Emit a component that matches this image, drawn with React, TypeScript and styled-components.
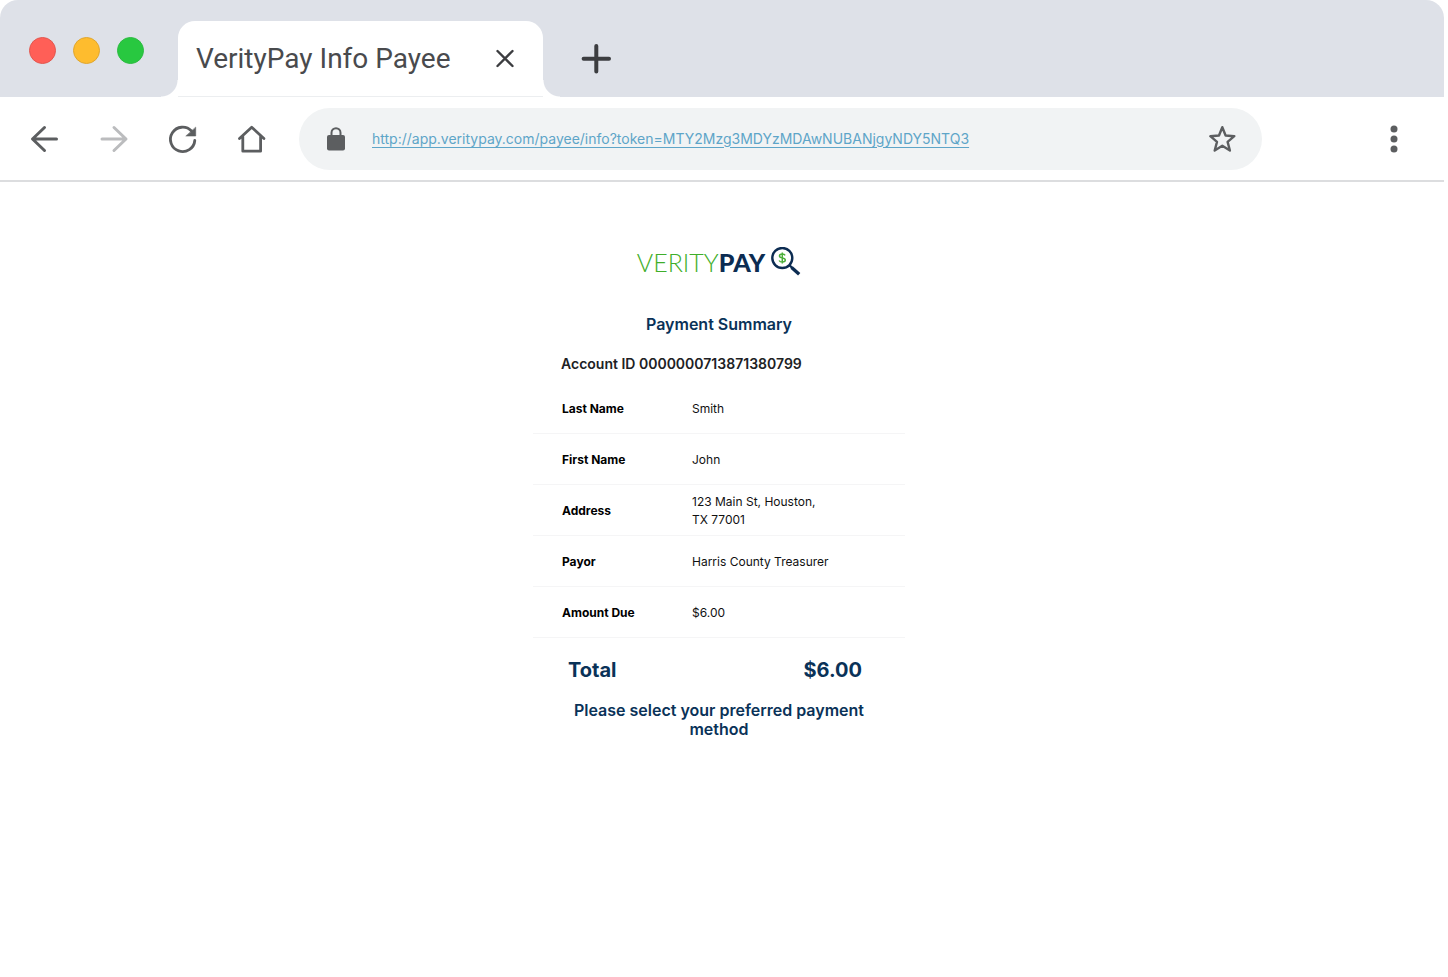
import React from "react";
import styled, { createGlobalStyle } from "styled-components";

const GlobalStyle = createGlobalStyle`
  *, *::before, *::after { box-sizing: border-box; }
  body { margin: 0; background: #fff; font-family: Inter, "Liberation Sans", sans-serif; }
  button { border: 0; padding: 0; background: none; font: inherit; color: inherit; cursor: pointer; }
`;

const BrowserFrame = styled.div`
  display: flex;
  flex-direction: column;
  min-height: 100vh;
  margin-right: 4px;
`;

const TabStrip = styled.header`
  display: flex;
  align-items: flex-end;
  height: 97px;
  padding-left: 29px;
  background: #dee1e8;
  border-radius: 18px 18px 0 0;
`;

const WindowControls = styled.div`
  display: flex;
  gap: 17px;
  width: 149px;
  margin-bottom: 33px;
`;

const WindowButton = styled.button<{ $fill: string; $edge: string }>`
  width: 27px;
  height: 27px;
  border-radius: 50%;
  background: ${(p) => p.$fill};
  border: 1px solid ${(p) => p.$edge};
`;

const Tab = styled.div`
  position: relative;
  display: flex;
  align-items: center;
  justify-content: space-between;
  width: 365px;
  height: 76px;
  padding: 0 26px 0 18px;
  background: #fff;
  border-radius: 17px 17px 0 0;
  border-bottom: 1px solid #eceef0;

  &::before,
  &::after {
    content: "";
    position: absolute;
    bottom: -1px;
    width: 17px;
    height: 17px;
  }
  &::before {
    right: 100%;
    background: radial-gradient(circle at 0 0, transparent 16px, #fff 17px);
  }
  &::after {
    left: 100%;
    background: radial-gradient(circle at 100% 0, transparent 16px, #fff 17px);
  }
`;

const TabTitle = styled.span`
  font: 400 28px/36px Roboto, "Liberation Sans", sans-serif;
  color: #494a4d;
  white-space: nowrap;
`;

const IconButton = styled.button<{ $size?: number; $color?: string }>`
  display: grid;
  place-items: center;
  flex: none;
  width: ${(p) => p.$size ?? 32}px;
  height: ${(p) => p.$size ?? 32}px;
  color: ${(p) => p.$color ?? "#5c5e60"};
`;

const NewTab = styled.div`
  margin: 0 0 22px 37px;
`;

const Toolbar = styled.nav`
  display: flex;
  align-items: center;
  height: 85px;
  padding: 0 34px 0 28px;
  border-bottom: 2px solid #dcdddf;
`;

const NavButtons = styled.div`
  display: flex;
  gap: 37px;
`;

const AddressBar = styled.div`
  display: flex;
  align-items: center;
  flex: 1;
  height: 62px;
  margin: 0 116px 0 32px;
  padding: 0 24px 0 28px;
  border-radius: 31px;
  background: #f1f3f4;
  color: #5c5e60;
`;

const Address = styled.a`
  flex: 1;
  margin-left: 27px;
  font-size: 14px;
  line-height: 20px;
  color: #5ea5c8;
  text-decoration: underline;
  text-underline-offset: 3px;
`;

const Page = styled.main`
  display: flex;
  flex-direction: column;
  align-items: center;
  padding: 64px 6px 0 0;
`;

const Logo = styled.div`
  display: flex;
  align-items: center;
  gap: 6px;
  height: 32px;
`;

const Wordmark = styled.span`
  font: 300 25px/32px Lato, sans-serif;
  color: #3fae2a;
`;

const WordmarkBold = styled.b`
  font-weight: 900;
  color: #0c2c52;
`;

const Summary = styled.section`
  display: flex;
  flex-direction: column;
  width: 372px;
  max-width: 100%;
`;

const Heading = styled.h1`
  margin: 36px 0 0;
  font-size: 16px;
  font-weight: 600;
  line-height: 20px;
  text-align: center;
  color: #0a3258;
`;

const Account = styled.h2`
  margin: 20px 0 9px;
  padding-left: 28px;
  font-size: 14px;
  font-weight: 600;
  line-height: 20px;
  color: #202124;
`;

const Details = styled.table`
  width: 100%;
  border-spacing: 0;
  table-layout: fixed;
  font-size: 12px;
  line-height: 18px;
  color: #111;
`;

const Row = styled.tr`
  height: 51px;

  > * {
    border-bottom: 1px solid #f5f5f6;
  }
`;

const Label = styled.th`
  width: 159px;
  padding: 2px 0 0 29px;
  text-align: left;
  font-weight: 700;
  color: #000;
`;

const Value = styled.td`
  padding: 2px 0 0;
  white-space: pre-line;
`;

const Total = styled.div`
  display: flex;
  justify-content: space-between;
  padding: 18px 43px 0 35px;
  font-size: 20px;
  font-weight: 700;
  line-height: 28px;
  color: #0a3258;
`;

const Prompt = styled.p`
  margin: 17px 30px 0;
  font-size: 16px;
  font-weight: 600;
  line-height: 19px;
  text-align: center;
  color: #0a3258;
`;

const rows = [
  ["Last Name", "Smith"],
  ["First Name", "John"],
  ["Address", "123 Main St, Houston,\nTX 77001"],
  ["Payor", "Harris County Treasurer"],
  ["Amount Due", "$6.00"],
];

const stroke = {
  fill: "none",
  stroke: "currentColor",
  strokeWidth: 3,
  strokeLinecap: "round" as const,
  strokeLinejoin: "round" as const,
};

const BackIcon = () => (
  <svg width="32" height="32" viewBox="0 0 32 32" {...stroke}>
    <path d="M28.500 16H5M16.500 4.500 4.500 16l12 11.500" />
  </svg>
);

const ForwardIcon = () => (
  <svg width="32" height="32" viewBox="0 0 32 32" {...stroke}>
    <path d="M5 16h23M17 4.500 29 16 17 27.500" />
  </svg>
);

const ReloadIcon = () => (
  <svg width="32" height="32" viewBox="0 0 32 32" {...stroke} strokeWidth={2.8}>
    <path d="M28.800 17.500A12.200 12.200 0 1 1 25.500 8" />
    <path d="M29.700 4.500v8.500h-9.500z" fill="currentColor" strokeWidth="0.600" />
  </svg>
);

const HomeIcon = () => (
  <svg width="32" height="32" viewBox="0 0 32 32" {...stroke} strokeWidth={2.8}>
    <path d="M4.500 15.500 16.700 4.200 28.900 15.500M7.800 13.500v14.700h17.800V13.500" />
  </svg>
);

const LockIcon = () => (
  <svg width="18" height="24" viewBox="0 0 18 24">
    <path d="M4.500 10V5.700a4.500 4.500 0 0 1 9 0V10" fill="none" stroke="currentColor" strokeWidth="2" />
    <rect y="8" width="18" height="15.500" rx="2" fill="currentColor" />
  </svg>
);

const StarIcon = () => (
  <svg width="32" height="32" viewBox="0 0 32 32" {...stroke} strokeWidth={2.4}>
    <path d="M16.300 4.200 19.600 12.500 28.300 13.200 21.600 18.900 23.900 27.500 16.300 22.800 8.700 27.500 11 18.900 4.300 13.200 13 12.500Z" />
  </svg>
);

const MoreIcon = () => (
  <svg width="32" height="32" viewBox="0 0 32 32" fill="currentColor">
    <circle cx="16" cy="6" r="3.500" />
    <circle cx="16" cy="16" r="3.500" />
    <circle cx="16" cy="26" r="3.500" />
  </svg>
);

const CloseIcon = () => (
  <svg width="24" height="24" viewBox="0 0 24 24" {...stroke} strokeWidth={2.4}>
    <path d="m4.500 4 15 15M19.500 4l-15 15" />
  </svg>
);

const PlusIcon = () => (
  <svg width="32" height="32" viewBox="0 0 32 32" {...stroke} strokeWidth={4}>
    <path d="M16.300 3v25.400M3.600 15.700H29" />
  </svg>
);

const MagnifierIcon = () => (
  <svg width="30" height="30" viewBox="0 0 30 30" fill="none">
    <circle cx="11.300" cy="11" r="10" stroke="#0c2c52" strokeWidth="2.400" />
    <path d="m18.300 18 3 3" stroke="#0c2c52" strokeWidth="2.400" />
    <path d="m20.600 20.400 7.600 6.800" stroke="#0c2c52" strokeWidth="3.400" />
    <path
      d="M14.100 8.300c-.5-1-1.500-1.400-2.800-1.400-1.600 0-2.800.7-2.800 2 0 2.900 5.800 1.300 5.800 4.200 0 1.300-1.300 2-3 2-1.500 0-2.600-.5-3.200-1.600M11.300 5.500v11"
      stroke="#4bae3a"
      strokeWidth="1.500"
    />
  </svg>
);

export default function App() {
  return (
    <>
      <GlobalStyle />
      <BrowserFrame>
        <TabStrip>
          <WindowControls>
            <WindowButton aria-label="Close window" $fill="#ff5f57" $edge="#e2574f" />
            <WindowButton aria-label="Minimize window" $fill="#febc2e" $edge="#dfa62f" />
            <WindowButton aria-label="Maximize window" $fill="#28c840" $edge="#2cbb41" />
          </WindowControls>
          <Tab>
            <TabTitle>VerityPay Info Payee</TabTitle>
            <IconButton aria-label="Close tab" $size={24} $color="#3c3d40">
              <CloseIcon />
            </IconButton>
          </Tab>
          <NewTab>
            <IconButton aria-label="New tab" $color="#3c3d40">
              <PlusIcon />
            </IconButton>
          </NewTab>
        </TabStrip>
        <Toolbar>
          <NavButtons>
            <IconButton aria-label="Back"><BackIcon /></IconButton>
            <IconButton aria-label="Forward" $color="#bbbcbe"><ForwardIcon /></IconButton>
            <IconButton aria-label="Reload"><ReloadIcon /></IconButton>
            <IconButton aria-label="Home"><HomeIcon /></IconButton>
          </NavButtons>
          <AddressBar>
            <LockIcon />
            <Address href="#">http://app.veritypay.com/payee/info?token=MTY2Mzg3MDYzMDAwNUBANjgyNDY5NTQ3</Address>
            <IconButton aria-label="Bookmark"><StarIcon /></IconButton>
          </AddressBar>
          <IconButton aria-label="Menu"><MoreIcon /></IconButton>
        </Toolbar>
        <Page>
          <Logo>
            <Wordmark>VERITY<WordmarkBold>PAY</WordmarkBold></Wordmark>
            <MagnifierIcon />
          </Logo>
          <Summary>
            <Heading>Payment Summary</Heading>
            <Account>Account ID 0000000713871380799</Account>
            <Details>
              <tbody>
                {rows.map(([label, value]) => (
                  <Row key={label}>
                    <Label scope="row">{label}</Label>
                    <Value>{value}</Value>
                  </Row>
                ))}
              </tbody>
            </Details>
            <Total>
              <span>Total</span>
              <span>$6.00</span>
            </Total>
            <Prompt>Please select your preferred payment method</Prompt>
          </Summary>
        </Page>
      </BrowserFrame>
    </>
  );
}
